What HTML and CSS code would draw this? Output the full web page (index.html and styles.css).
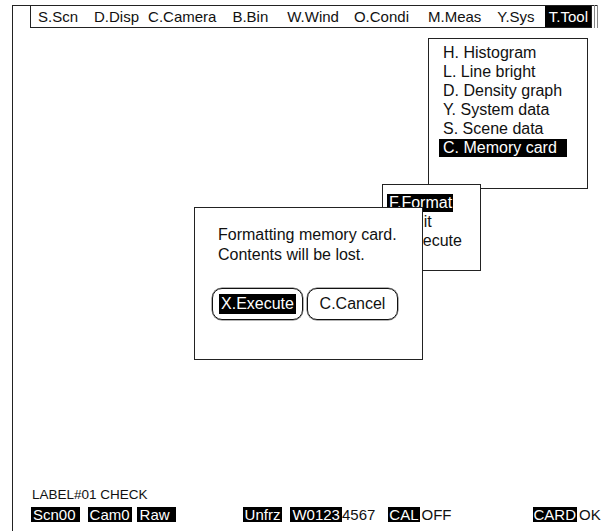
FILE: index.html
```html
<!DOCTYPE html>
<html lang="en">
<head>
  <meta charset="UTF-8" />
  <title>Tool - Memory card</title>
  <link rel="stylesheet" href="styles.css">
</head>
<body>
  <div class="screen">
    <div class="panel">
      <div class="top-row">
        <div class="menubar">
          <span class="menu-item">S.Scn</span>
          <span class="menu-item">D.Disp</span>
          <span class="menu-item">C.Camera</span>
          <span class="menu-item">B.Bin</span>
          <span class="menu-item">W.Wind</span>
          <span class="menu-item">O.Condi</span>
          <span class="menu-item">M.Meas</span>
          <span class="menu-item">Y.Sys</span>
          <span class="menu-item active">T.Tool</span>
        </div>
        <span class="rail"></span>
        <span class="rail"></span>
      </div>

      <div class="status">
        <div class="label">LABEL#01 CHECK</div>
        <div class="status-row">
          <span class="tag scn">Scn00</span>
          <span class="tag cam">Cam0</span>
          <span class="tag raw">Raw</span>
          <span class="tag frz">Unfrz</span>
          <span class="tag win">W0123</span><span class="plain">4567</span>
          <span class="tag cal">CAL</span><span class="plain val">OFF</span>
          <span class="tag card">CARD</span><span class="plain val">OK</span>
        </div>
      </div>
    </div>

    <!-- выпадающее меню T.Tool -->
    <div class="tool-menu">
      <div class="item">H. Histogram</div>
      <div class="item">L. Line bright</div>
      <div class="item">D. Density graph</div>
      <div class="item">Y. System data</div>
      <div class="item">S. Scene data</div>
      <div class="item"><span class="sel">C. Memory card</span></div>
    </div>

    <div class="sub-menu">
      <div class="item"><span class="sel">F.Format</span></div>
      <div class="item">E.Edit</div>
      <div class="item">X.Execute</div>
    </div>

    <div class="dialog">
      <div class="msg">Formatting memory card.</div>
      <div class="msg">Contents will be lost.</div>
      <div class="buttons">
        <div class="btn"><span class="btn-sel">X.Execute</span></div>
        <div class="btn">C.Cancel</div>
      </div>
    </div>
  </div>
</body>
</html>
```

FILE: styles.css
```css
html, body {
  margin: 0;
  padding: 0;
  background: #fff;
}

body {
  font-family: "Liberation Sans", Arial, sans-serif;
  color: #111;
  overflow: hidden;
}

.screen {
  position: relative;
  width: 603px;
  height: 531px;
  overflow: hidden;
}

.panel {
  box-sizing: border-box;
  margin: 5px 0 0 12px;
  width: 586px;
  height: 526px;
  border-top: 1px solid #222;
  border-left: 1px solid #222;
  display: flex;
  flex-direction: column;
}

/* верхнее меню */
.top-row {
  display: flex;
  margin-top: -1px;
}

.menubar {
  box-sizing: border-box;
  display: flex;
  margin-left: 17px;
  width: 562px;
  height: 23px;
  padding-left: 7px;
  border: 1px solid #222;
  font-size: 15px;
  line-height: 21px;
  white-space: nowrap;
}

.menu-item:nth-child(2) { margin-left: 16px; }
.menu-item:nth-child(3) { margin-left: 9px; }
.menu-item:nth-child(4) { margin-left: 16px; }
.menu-item:nth-child(5) { margin-left: 19px; }
.menu-item:nth-child(6) { margin-left: 15px; }
.menu-item:nth-child(7) { margin-left: 19px; }
.menu-item:nth-child(8) { margin-left: 16px; }

.menu-item.active {
  margin-left: auto;
  padding: 0 3px 0 4px;
  background: #000;
  color: #fff;
}

.rail {
  width: 1px;
  height: 23px;
  margin-left: 2px;
  background: #888;
}

/* выпадающие меню */
.tool-menu, .sub-menu, .dialog {
  position: absolute;
  box-sizing: border-box;
  background: #fff;
  border: 1px solid #222;
  font-size: 16px;
}

.tool-menu {
  left: 428px;
  top: 38px;
  width: 160px;
  height: 151px;
  padding: 4px 0 0 14px;
}

.item {
  line-height: 19px;
  white-space: nowrap;
}

.sel {
  display: inline-block;
  background: #000;
  color: #fff;
  line-height: 18px;
}

.tool-menu .sel {
  margin-left: -4px;
  padding: 0 10px 0 4px;
}

.sub-menu {
  left: 382px;
  top: 184px;
  width: 99px;
  height: 87px;
  padding: 8px 0 0 6px;
}

.sub-menu .sel {
  margin-left: -2px;
  padding: 0 1px 0 2px;
}

/* диалог */
.dialog {
  left: 194px;
  top: 207px;
  width: 229px;
  height: 153px;
  padding: 17px 0 0 23px;
}

.msg {
  line-height: 20px;
}

.buttons {
  display: flex;
  gap: 4px;
  margin: 23px 0 0 -6px;
}

.btn {
  box-sizing: border-box;
  display: flex;
  align-items: center;
  justify-content: center;
  width: 91px;
  height: 32px;
  border: 1px solid #111;
  border-radius: 10px;
  box-shadow: 0 0 0 0.5px #666;
}

.btn-sel {
  background: #000;
  color: #fff;
  padding: 0 2px;
  line-height: 20px;
}

/* строка состояния */
.status {
  margin-top: auto;
  padding-bottom: 9px;
}

.label {
  padding-left: 19px;
  font-size: 13.5px;
  line-height: 16px;
}

.status-row {
  display: flex;
  margin-top: 4px;
  font-size: 15px;
  line-height: 15px;
  white-space: nowrap;
}

.tag {
  background: #000;
  color: #fff;
  padding: 0 2px;
}

.scn { margin-left: 18px; padding-right: 4px; }
.cam { margin-left: 8px; }
.raw { margin-left: 5px; padding: 0 6px 0 3px; }
.frz { margin-left: 67px; }
.win { margin-left: 8px; }
.cal { margin-left: 13px; padding: 0 1px; }
.card { margin-left: 81px; padding: 0 1px; }
.val { margin-left: 2px; }
```
